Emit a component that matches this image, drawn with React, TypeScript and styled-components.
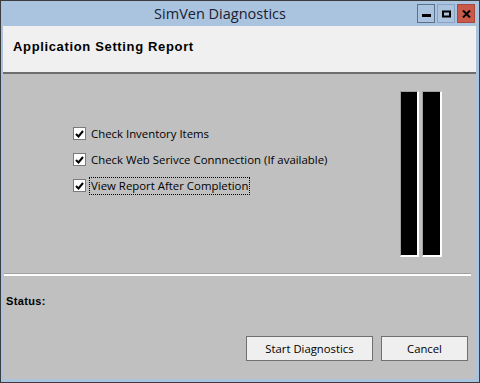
import React, { useState } from 'react';
import styled, { createGlobalStyle } from 'styled-components';

const GlobalStyle = createGlobalStyle`
  html, body {
    margin: 0;
    padding: 0;
    background: #c0c0c0;
  }
  * {
    box-sizing: border-box;
  }
`;

const Window = styled.div`
  width: 480px;
  height: 383px;
  display: flex;
  flex-direction: column;
  border: 1px solid #3c3c3c;
  background: #aac3df;
  padding: 0 3px 3px 2px;
  font-family: 'Open Sans', 'Liberation Sans', sans-serif;
`;

const TitleBar = styled.div`
  height: 25px;
  display: flex;
  align-items: center;
`;

const Title = styled.div`
  flex: 1;
  text-align: center;
  padding-left: 20px;
  font-size: 14.5px;
  color: #1a2030;
  line-height: 25px;
`;

const Controls = styled.div`
  display: flex;
  gap: 2px;
  padding-right: 1px;
  align-self: flex-start;
  margin-top: 3px;
`;

const CtrlButton = styled.div<{ $variant?: 'close' | 'max' | 'min' }>`
  width: 18px;
  height: 19px;
  display: flex;
  align-items: center;
  justify-content: center;
  border: 1px solid
    ${({ $variant }) =>
      $variant === 'close' ? '#a8483c' : $variant === 'max' ? '#8aa3c2' : '#5c708c'};
  background: ${({ $variant }) => ($variant === 'close' ? '#c95a4a' : '#aac3df')};
`;

const Content = styled.div`
  flex: 1;
  display: flex;
  flex-direction: column;
  background: #c0c0c0;
`;

const Header = styled.div`
  height: 48px;
  background: #f0f0f0;
  border-bottom: 2px solid #6e6e6e;
  padding: 13px 0 0 10px;
  font-family: 'Liberation Sans', Arial, sans-serif;
  font-weight: bold;
  font-size: 13px;
  letter-spacing: 0.65px;
  color: #000;
`;

const Main = styled.div`
  height: 199px;
  display: flex;
`;

const Options = styled.div`
  display: flex;
  flex-direction: column;
  padding: 50px 0 0 70px;
  gap: 7px;
`;

const OptionRow = styled.label`
  display: flex;
  align-items: center;
  height: 19px;
  font-size: 11.4px;
  color: #000;
  cursor: default;
`;

const Box = styled.span`
  width: 13px;
  height: 13px;
  background: #fff;
  border: 1px solid #7a7a7a;
  display: flex;
  align-items: center;
  justify-content: center;
  margin-right: 4px;
`;

const LabelText = styled.span<{ $focused?: boolean }>`
  padding: 0 1px;
  line-height: 16px;
  outline: ${({ $focused }) => ($focused ? '1px dotted #000' : 'none')};
`;

const Meter = styled.div`
  margin: 17px 34px 0 auto;
  height: 166px;
  display: flex;
  gap: 3px;
`;

const MeterBar = styled.div<{ $width: number }>`
  width: ${({ $width }) => $width}px;
  height: 100%;
  background: #000;
  border-top: 1px solid #a0a0a0;
  border-left: 1px solid #a0a0a0;
  border-right: 2px solid #fff;
  border-bottom: 2px solid #fff;
`;

const Separator = styled.div`
  margin: 0 5px 0 1px;
  border-top: 1px solid #a0a0a0;
  border-bottom: 2px solid #fff;
`;

const StatusRow = styled.div`
  padding: 19px 0 0 3px;
  height: 60px;
  font-family: 'Liberation Sans', Arial, sans-serif;
  font-size: 11px;
  font-weight: bold;
  letter-spacing: 0.35px;
  color: #000;
`;

const Footer = styled.div`
  display: flex;
  justify-content: flex-end;
  gap: 8px;
  padding-right: 8px;
`;

const Button = styled.button<{ $width: number }>`
  width: ${({ $width }) => $width}px;
  height: 25px;
  background: #efefef;
  border: 1px solid #707070;
  border-radius: 0;
  font-family: 'Open Sans', 'Liberation Sans', sans-serif;
  font-size: 11.3px;
  color: #000;
  padding: 0;
`;

const Check = () => (
  <svg width="9" height="8" viewBox="0 0 9 8">
    <path d="M1 4 L3.5 6.5 L8 1" stroke="#000" strokeWidth="2" fill="none" />
  </svg>
);

const options = [
  'Check Inventory Items',
  'Check Web Serivce Connnection (If available)',
  'View Report After Completion',
];

export default function App() {
  const [checked, setChecked] = useState([true, true, true]);

  const toggle = (i: number) =>
    setChecked((prev) => prev.map((v, j) => (j === i ? !v : v)));

  return (
    <>
      <GlobalStyle />
      <Window>
        <TitleBar>
          <Title>SimVen Diagnostics</Title>
          <Controls>
            <CtrlButton $variant="min">
              <svg width="9" height="8" viewBox="0 0 9 8">
                <rect x="0" y="4" width="9" height="3" fill="#000" />
              </svg>
            </CtrlButton>
            <CtrlButton $variant="max">
              <svg width="9" height="8" viewBox="0 0 9 8">
                <rect x="1" y="1.5" width="7" height="5" stroke="#000" strokeWidth="2" fill="none" />
              </svg>
            </CtrlButton>
            <CtrlButton $variant="close">
              <svg width="9" height="8" viewBox="0 0 9 8">
                <path d="M1 0.5 L8 7.5 M8 0.5 L1 7.5" stroke="#000" strokeWidth="2" />
              </svg>
            </CtrlButton>
          </Controls>
        </TitleBar>
        <Content>
          <Header>Application Setting Report</Header>
          <Main>
            <Options>
              {options.map((text, i) => (
                <OptionRow key={text} onClick={() => toggle(i)}>
                  <Box>{checked[i] && <Check />}</Box>
                  <LabelText $focused={i === 2}>{text}</LabelText>
                </OptionRow>
              ))}
            </Options>
            <Meter>
              <MeterBar $width={19} />
              <MeterBar $width={20} />
            </Meter>
          </Main>
          <Separator />
          <StatusRow>Status:</StatusRow>
          <Footer>
            <Button $width={127}>Start Diagnostics</Button>
            <Button $width={87}>Cancel</Button>
          </Footer>
        </Content>
      </Window>
    </>
  );
}
